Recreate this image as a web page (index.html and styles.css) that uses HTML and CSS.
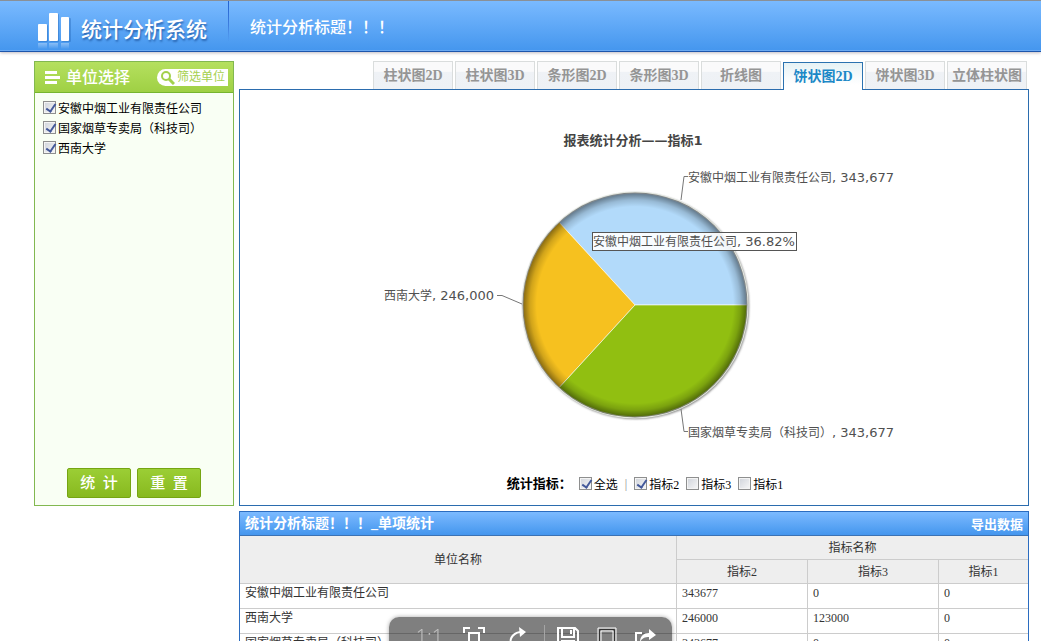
FILE: index.html
```html
<!DOCTYPE html>
<html lang="zh-CN">
<head>
<meta charset="utf-8">
<title>统计分析系统</title>
<link rel="stylesheet" href="styles.css">
</head>
<body>
<header class="topbar">
  <div class="brand">
    <svg class="brand-mark" width="34" height="38" viewBox="0 0 34 38" aria-hidden="true">
      <defs>
        <linearGradient id="reflect" x1="0" y1="0" x2="0" y2="1">
          <stop offset="0" stop-color="#fff" stop-opacity=".35"/>
          <stop offset="1" stop-color="#fff" stop-opacity="0"/>
        </linearGradient>
      </defs>
      <g fill="#1d5fb0" opacity=".35"><rect x="2" y="14" width="9" height="17" rx="1"/><rect x="13" y="3" width="9" height="28" rx="1"/><rect x="25" y="7" width="9" height="24" rx="1"/></g>
      <g fill="#fff"><rect x="1" y="13" width="9" height="17" rx="1"/><rect x="12" y="2" width="9" height="28" rx="1"/><rect x="24" y="6" width="8" height="24" rx="1"/></g>
      <g fill="url(#reflect)"><rect x="1" y="32" width="9" height="6"/><rect x="12" y="32" width="9" height="6"/><rect x="24" y="32" width="8" height="6"/></g>
    </svg>
    <h1 class="brand-name">统计分析系统</h1>
  </div>
  <p class="page-title">统计分析标题！！！</p>
</header>

<main class="layout">
  <aside class="sidebar">
    <div class="sidebar-head">
      <svg width="15" height="14" viewBox="0 0 15 14" aria-hidden="true"><path fill="#fff" d="M0 1h12v3H0zM0 6h15v3H0zM0 11h12v3H0z"/></svg>
      <h2 class="sidebar-title">单位选择</h2>
      <button class="filter" type="button">
        <svg width="15" height="15" viewBox="0 0 15 15" aria-hidden="true"><circle cx="6" cy="6" r="4" fill="none" stroke="#a3d14c" stroke-width="2"/><path d="M9 9l5 5" stroke="#a3d14c" stroke-width="3"/></svg>
        <span>筛选单位</span>
      </button>
    </div>
    <div class="unit-list">
      <label class="check"><input type="checkbox" checked><span>安徽中烟工业有限责任公司</span></label>
      <label class="check"><input type="checkbox" checked><span>国家烟草专卖局（科技司）</span></label>
      <label class="check"><input type="checkbox" checked><span>西南大学</span></label>
    </div>
    <div class="actions">
      <button class="action" type="button">统&ensp;计</button>
      <button class="action" type="button">重&ensp;置</button>
    </div>
  </aside>

  <section class="report">
    <div class="tabs" role="tablist">
      <button class="tab" type="button" role="tab">柱状图2D</button>
      <button class="tab" type="button" role="tab">柱状图3D</button>
      <button class="tab" type="button" role="tab">条形图2D</button>
      <button class="tab" type="button" role="tab">条形图3D</button>
      <button class="tab" type="button" role="tab">折线图</button>
      <button class="tab is-active" type="button" role="tab" aria-selected="true">饼状图2D</button>
      <button class="tab" type="button" role="tab">饼状图3D</button>
      <button class="tab" type="button" role="tab">立体柱状图</button>
    </div>
    <div class="panel">
      <svg class="chart" viewBox="240 90 788 384" role="img" aria-label="报表统计分析">
        <defs>
          <radialGradient id="bevel" gradientUnits="userSpaceOnUse" cx="635" cy="305" r="113" fx="635" fy="305">
            <stop offset=".87" stop-color="#000" stop-opacity="0"/>
            <stop offset=".93" stop-color="#000" stop-opacity=".15"/>
            <stop offset="1" stop-color="#000" stop-opacity=".5"/>
          </radialGradient>
          <filter id="soft" x="-10%" y="-10%" width="120%" height="120%"><feGaussianBlur stdDeviation="1.2"/></filter>
        </defs>
        <text class="chart-title" x="633" y="145" text-anchor="middle">报表统计分析——指标1</text>
        <circle cx="636" cy="306" r="113" fill="#555" opacity=".75" filter="url(#soft)"/>
        <circle cx="635" cy="305" r="113.5" fill="#e4e8e0"/>
        <g stroke="#fff" stroke-opacity=".6" stroke-width="1">
          <path fill="#b2dafa" d="M635 305L559.3 222.5A112 112 0 0 1 747 305z"/>
          <path fill="#f6c11f" d="M635 305L559.3 222.5A112 112 0 0 0 559.3 387.5z"/>
          <path fill="#91bf11" d="M635 305L559.3 387.5A112 112 0 0 0 747 305z"/>
        </g>
        <circle cx="635" cy="305" r="112.5" fill="url(#bevel)"/>
        <g fill="none" stroke="#777">
          <path d="M681 200l3-23.500h4"/>
          <path d="M681 409l3 22.500h4"/>
          <path d="M497 295.500h5l20 8.500"/>
        </g>
        <g class="chart-label">
          <text x="688" y="182">安徽中烟工业有限责任公司<tspan class="num">, 343,677</tspan></text>
          <text x="688" y="437">国家烟草专卖局（科技司）<tspan class="num">, 343,677</tspan></text>
          <text x="494" y="300" text-anchor="end">西南大学<tspan class="num">, 246,000</tspan></text>
          <rect x="592.500" y="232.500" width="204" height="18" fill="#fff" fill-opacity=".9" stroke="#555"/>
          <text x="593" y="246">安徽中烟工业有限责任公司<tspan class="num">, 36.82%</tspan></text>
        </g>
      </svg>
      <fieldset class="metrics">
        <legend class="metrics-title">统计指标：</legend>
        <label class="check"><input type="checkbox" checked><span>全选</span></label>
        <span class="bar">|</span>
        <label class="check"><input type="checkbox" checked><span>指标2</span></label>
        <label class="check"><input type="checkbox"><span>指标3</span></label>
        <label class="check"><input type="checkbox"><span>指标1</span></label>
      </fieldset>
    </div>
  </section>

  <section class="data">
    <div class="data-head">
      <h2 class="data-title">统计分析标题！！！_单项统计</h2>
      <a class="export" href="#">导出数据</a>
    </div>
    <table class="grid">
      <colgroup><col><col class="col-mid"><col class="col-mid"><col class="col-end"></colgroup>
      <thead>
        <tr><th rowspan="2">单位名称</th><th colspan="3">指标名称</th></tr>
        <tr><th>指标2</th><th>指标3</th><th>指标1</th></tr>
      </thead>
      <tbody>
        <tr><td>安徽中烟工业有限责任公司</td><td>343677</td><td>0</td><td>0</td></tr>
        <tr><td>西南大学</td><td>246000</td><td>123000</td><td>0</td></tr>
        <tr><td>国家烟草专卖局（科技司）</td><td>343677</td><td>0</td><td>0</td></tr>
      </tbody>
    </table>
  </section>
</main>

<div class="viewer" role="toolbar">
  <button class="tool tool-ratio" type="button">1:1</button>
  <button class="tool" type="button" aria-label="适应窗口"><svg width="22" height="22" viewBox="0 0 22 22"><path stroke-width="2" d="M1 6V1h6M15 1h6v5M1 16v5h6M15 21h6v-5"/><rect x="6" y="6" width="10" height="10" stroke-width="2"/></svg></button>
  <button class="tool" type="button" aria-label="旋转"><svg width="22" height="26" viewBox="0 0 22 26"><path stroke-width="2" d="M15 5C7 5 2 11 4 17s8 7 12 4"/><path class="solid" d="M12 0l7 5-6 5z"/></svg></button>
  <span class="tool-split"></span>
  <button class="tool tool-narrow" type="button" aria-label="保存"><svg width="22" height="22" viewBox="0 0 22 22"><path stroke-width="2" d="M1 1h17l3 3v17H1zM5 1v9h12V1M5 21v-7h12v7"/><path stroke-width="2" d="M14 3v4"/></svg></button>
  <button class="tool tool-narrow" type="button" aria-label="页面"><svg width="20" height="22" viewBox="0 0 20 22"><path d="M1 1h18v20H1z"/><path stroke="#333" d="M2.500 2.500h15v17h-15z"/><path d="M4 4h12v14H4z"/></svg></button>
  <button class="tool tool-narrow" type="button" aria-label="分享"><svg width="22" height="22" viewBox="0 0 22 22"><path stroke-width="2" d="M7 6H1v14h17v-6"/><path class="solid" d="M5 15c0-6 4-9 9-9V2l7 6-7 5v-3c-4 0-7 1-9 5z"/></svg></button>
</div>
</body>
</html>
```
FILE: styles.css
```css
* { box-sizing: border-box; }

body {
  margin: 0;
  height: 100vh;
  overflow: hidden;
  background: #fff;
  color: #000;
  font: 12px/20px "Liberation Serif", "Noto Sans CJK SC", serif;
}

h1, h2, p { margin: 0; }

button {
  margin: 0;
  padding: 0;
  border: 0;
  background: none;
  color: inherit;
  font: inherit;
  cursor: pointer;
}

.topbar {
  display: flex;
  height: 52px;
  border-top: 1px solid #8a9097;
  border-bottom: 1px solid #1d56ac;
  background: linear-gradient(#7abaff, #4496ee);
  box-shadow: inset 0 -1px #6aa9f2, 0 1px 3px rgba(80, 60, 80, .35);
  color: #fff;
}

.brand {
  display: flex;
  gap: 10px;
  width: 229px;
  padding: 10px 0 0 37px;
  border-right: 1px solid;
  border-image: linear-gradient(#2160d0, #3f7fdf 50%, transparent 80%) 1;
}

.brand-name {
  font-size: 21px;
  line-height: 38px;
  font-weight: 500;
  text-shadow: 1px 2px 2px #2b68b4;
}

.page-title {
  padding: 10px 0 0 21px;
  font-size: 16px;
  line-height: 34px;
  font-weight: 500;
}

.layout {
  display: grid;
  grid-template-columns: 200px minmax(0, 1fr);
  gap: 5px;
  padding: 9px 12px 0 34px;
}

.sidebar {
  display: flex;
  flex-direction: column;
  border: 1px solid #82b850;
  background: #f9fff4;
}

.sidebar-head {
  display: flex;
  align-items: center;
  height: 31px;
  padding: 0 5px 0 10px;
  border-bottom: 1px solid #76b52e;
  background: linear-gradient(#b5e05f, #9fd044);
  color: #fff;
}

.sidebar-title {
  margin-left: 6px;
  padding-top: 2px;
  font-size: 16px;
  font-weight: 500;
}

.filter {
  display: flex;
  align-items: center;
  gap: 2px;
  height: 17px;
  margin-left: auto;
  padding: 0 3px;
  border-radius: 9px 0 0 9px;
  background: #fff;
  color: #a6d050;
  line-height: 17px;
}

.unit-list {
  display: flex;
  flex-direction: column;
  padding: 5px 8px;
}

.check {
  display: flex;
  align-items: flex-start;
  gap: 2px;
  height: 20px;
}

.check span { line-height: 22px; }

.check input {
  appearance: none;
  position: relative;
  width: 13px;
  height: 13px;
  margin: 3px 0 0;
  border: 1px solid #8e8f8f;
  background: linear-gradient(135deg, #cfd3da, #f8f8f8);
  box-shadow: inset 0 0 0 1px #f4f4f4;
}

.check input:checked::after {
  content: "";
  position: absolute;
  left: 4px;
  top: 0;
  width: 4px;
  height: 8px;
  border: solid #43599a;
  border-width: 0 2px 2px 0;
  transform: rotate(35deg);
}

.actions {
  display: flex;
  justify-content: center;
  gap: 6px;
  margin-top: auto;
  padding-bottom: 7px;
}

.action {
  width: 64px;
  height: 30px;
  border: 1px solid #76a512;
  border-radius: 2px;
  background: linear-gradient(#9bce35, #88b91f);
  color: #fff;
  font-size: 15px;
  font-weight: 500;
}

.report {
  display: flex;
  flex-direction: column;
}

.tabs {
  display: flex;
  justify-content: flex-end;
  gap: 2px;
  height: 28px;
  padding-right: 2px;
}

.tab {
  width: 80px;
  height: 28px;
  border: 1px solid #dadddd;
  border-bottom: 0;
  background: linear-gradient(#fafafb 35%, #eff2f6 36%, #eef1f5);
  color: #959595;
  font-size: 14px;
  font-weight: 700;
}

.tab.is-active {
  z-index: 1;
  margin-top: 1px;
  border-color: #2b72b0;
  background: linear-gradient(#e6f2f5, #fff 80%);
  color: #1c88c7;
}

.panel {
  flex: 1;
  border: 1px solid #2b6cae;
  padding-bottom: 11px;
}

.chart {
  display: block;
  width: 100%;
  height: 384px;
}

.chart-title {
  fill: #444;
  font: 700 13px "DejaVu Sans", "Noto Sans CJK SC", sans-serif;
}

.chart-label {
  fill: #505050;
  font: 12px "DejaVu Sans", "Noto Sans CJK SC", sans-serif;
}

.chart-label .num { font-size: 13px; }

.metrics {
  display: flex;
  justify-content: center;
  gap: 7px;
  height: 20px;
  margin: 0;
  padding: 0 0 0 22px;
  border: 0;
}

.metrics-title {
  display: contents;
  font-size: 13px;
  font-weight: 700;
}

.bar { color: #888; }

.data {
  grid-column: 2;
  border: 1px solid #2b6cc0;
}

.data-head {
  display: flex;
  justify-content: space-between;
  height: 24px;
  padding: 0 5px;
  border-bottom: 1px solid #3b72b4;
  background: linear-gradient(#7cbaff, #4496ee);
  color: #fff;
  font-weight: 700;
  line-height: 24px;
}

.data-title { font-size: 14px; line-height: 24px; }

.export {
  color: #fff;
  font-size: 13px;
  line-height: 26px;
  text-decoration: none;
}

.grid {
  width: 100%;
  border-collapse: separate;
  border-spacing: 0;
  table-layout: fixed;
  color: #333;
}

.col-mid { width: 131px; }
.col-end { width: 90px; }

.grid th {
  height: 24px;
  padding: 0;
  border-bottom: 1px solid #ccc;
  border-left: 1px solid #ccc;
  background: #eee;
  font-weight: 400;
}

.grid td {
  height: 25px;
  padding: 0 5px;
  border-bottom: 1px solid #ccc;
  border-left: 1px solid #ccc;
  line-height: 18px;
  vertical-align: top;
}

.grid th:first-child[rowspan],
.grid td:first-child { border-left: 0; }

/* floating image-viewer toolbar, docked over the page bottom */
.viewer {
  position: fixed;
  left: 50%;
  bottom: -24px;
  display: flex;
  width: 283px;
  height: 48px;
  margin-left: -132px;
  padding: 8px 0 0 19px;
  border-radius: 10px;
  background: rgba(0, 0, 0, .5);
  box-shadow: 0 0 4px rgba(0, 0, 0, .35);
}

.tool {
  display: flex;
  justify-content: center;
  align-items: flex-start;
  width: 44px;
  height: 32px;
  padding-top: 2px;
}

.tool-narrow { width: 39px; }

.tool-ratio {
  padding-top: 0;
  color: #c4c4c4;
  font: 300 20px/24px "Open Sans", "Noto Sans", sans-serif;
}

.tool-split {
  width: 1px;
  height: 32px;
  margin: 0 4px;
  background: #a5a5a5;
}

.tool svg { fill: none; stroke: #fff; }
.tool .solid { fill: #fff; stroke: none; }
```
